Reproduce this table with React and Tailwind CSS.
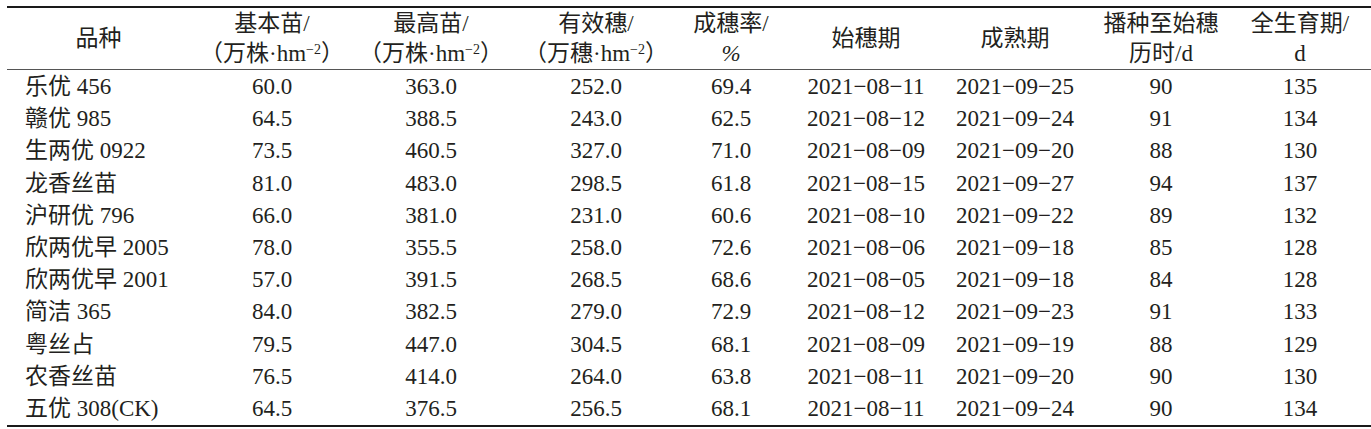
import React from "react";

const cols = "grid grid-cols-[183px_164px_154px_176px_94px_176px_122px_170px_108px_1fr]";

const rows = [
  ["乐优 456", "60.0", "363.0", "252.0", "69.4", "2021−08−11", "2021−09−25", "90", "135"],
  ["赣优 985", "64.5", "388.5", "243.0", "62.5", "2021−08−12", "2021−09−24", "91", "134"],
  ["生两优 0922", "73.5", "460.5", "327.0", "71.0", "2021−08−09", "2021−09−20", "88", "130"],
  ["龙香丝苗", "81.0", "483.0", "298.5", "61.8", "2021−08−15", "2021−09−27", "94", "137"],
  ["沪研优 796", "66.0", "381.0", "231.0", "60.6", "2021−08−10", "2021−09−22", "89", "132"],
  ["欣两优早 2005", "78.0", "355.5", "258.0", "72.6", "2021−08−06", "2021−09−18", "85", "128"],
  ["欣两优早 2001", "57.0", "391.5", "268.5", "68.6", "2021−08−05", "2021−09−18", "84", "128"],
  ["简洁 365", "84.0", "382.5", "279.0", "72.9", "2021−08−12", "2021−09−23", "91", "133"],
  ["粤丝占", "79.5", "447.0", "304.5", "68.1", "2021−08−09", "2021−09−19", "88", "129"],
  ["农香丝苗", "76.5", "414.0", "264.0", "63.8", "2021−08−11", "2021−09−20", "90", "130"],
  ["五优 308(CK)", "64.5", "376.5", "256.5", "68.1", "2021−08−11", "2021−09−24", "90", "134"],
];

const Unit = ({ children }) => (
  <span>
    （{children}·hm<sup className="text-[14px]">−2</sup>）
  </span>
);

const headers = [
  ["品种"],
  ["基本苗/", <Unit key="a">万株</Unit>],
  ["最高苗/", <Unit key="b">万株</Unit>],
  ["有效穗/", <Unit key="c">万穗</Unit>],
  ["成穗率/", <span key="d" className="italic">%</span>],
  ["始穗期"],
  ["成熟期"],
  ["播种至始穗", "历时/d"],
  ["全生育期/", "d"],
];

const Cell = ({ children, left }) => (
  <div className={`flex items-center whitespace-nowrap ${left ? "justify-start pl-[18px]" : "justify-center"}`}>
    {children}
  </div>
);

export default function App() {
  return (
    <div
      className="w-[1371px] h-[429px] bg-white text-[#231f20] pt-[6px] pl-[7px] text-[23px]"
      style={{ fontFamily: '"Liberation Serif", "Noto Sans CJK SC", serif' }}
    >
      <div className="border-t-2 border-b-2 border-[#1a1a1a]">
        <div className={`${cols} h-[62px] border-b-[1.5px] border-[#555]`}>
          {headers.map((h, i) => (
            <div key={i} className="flex flex-col items-center justify-center leading-[30px] whitespace-nowrap">
              {h.map((line, j) => (
                <div key={j}>{line}</div>
              ))}
            </div>
          ))}
          <div />
        </div>
        <div className="pt-[1px]">
          {rows.map((r, i) => (
            <div key={i} className={`${cols} h-[32.2px] leading-[32px]`}>
              {r.map((v, j) => (
                <Cell key={j} left={j === 0}>
                  {v}
                </Cell>
              ))}
              <div />
            </div>
          ))}
        </div>
      </div>
    </div>
  );
}
